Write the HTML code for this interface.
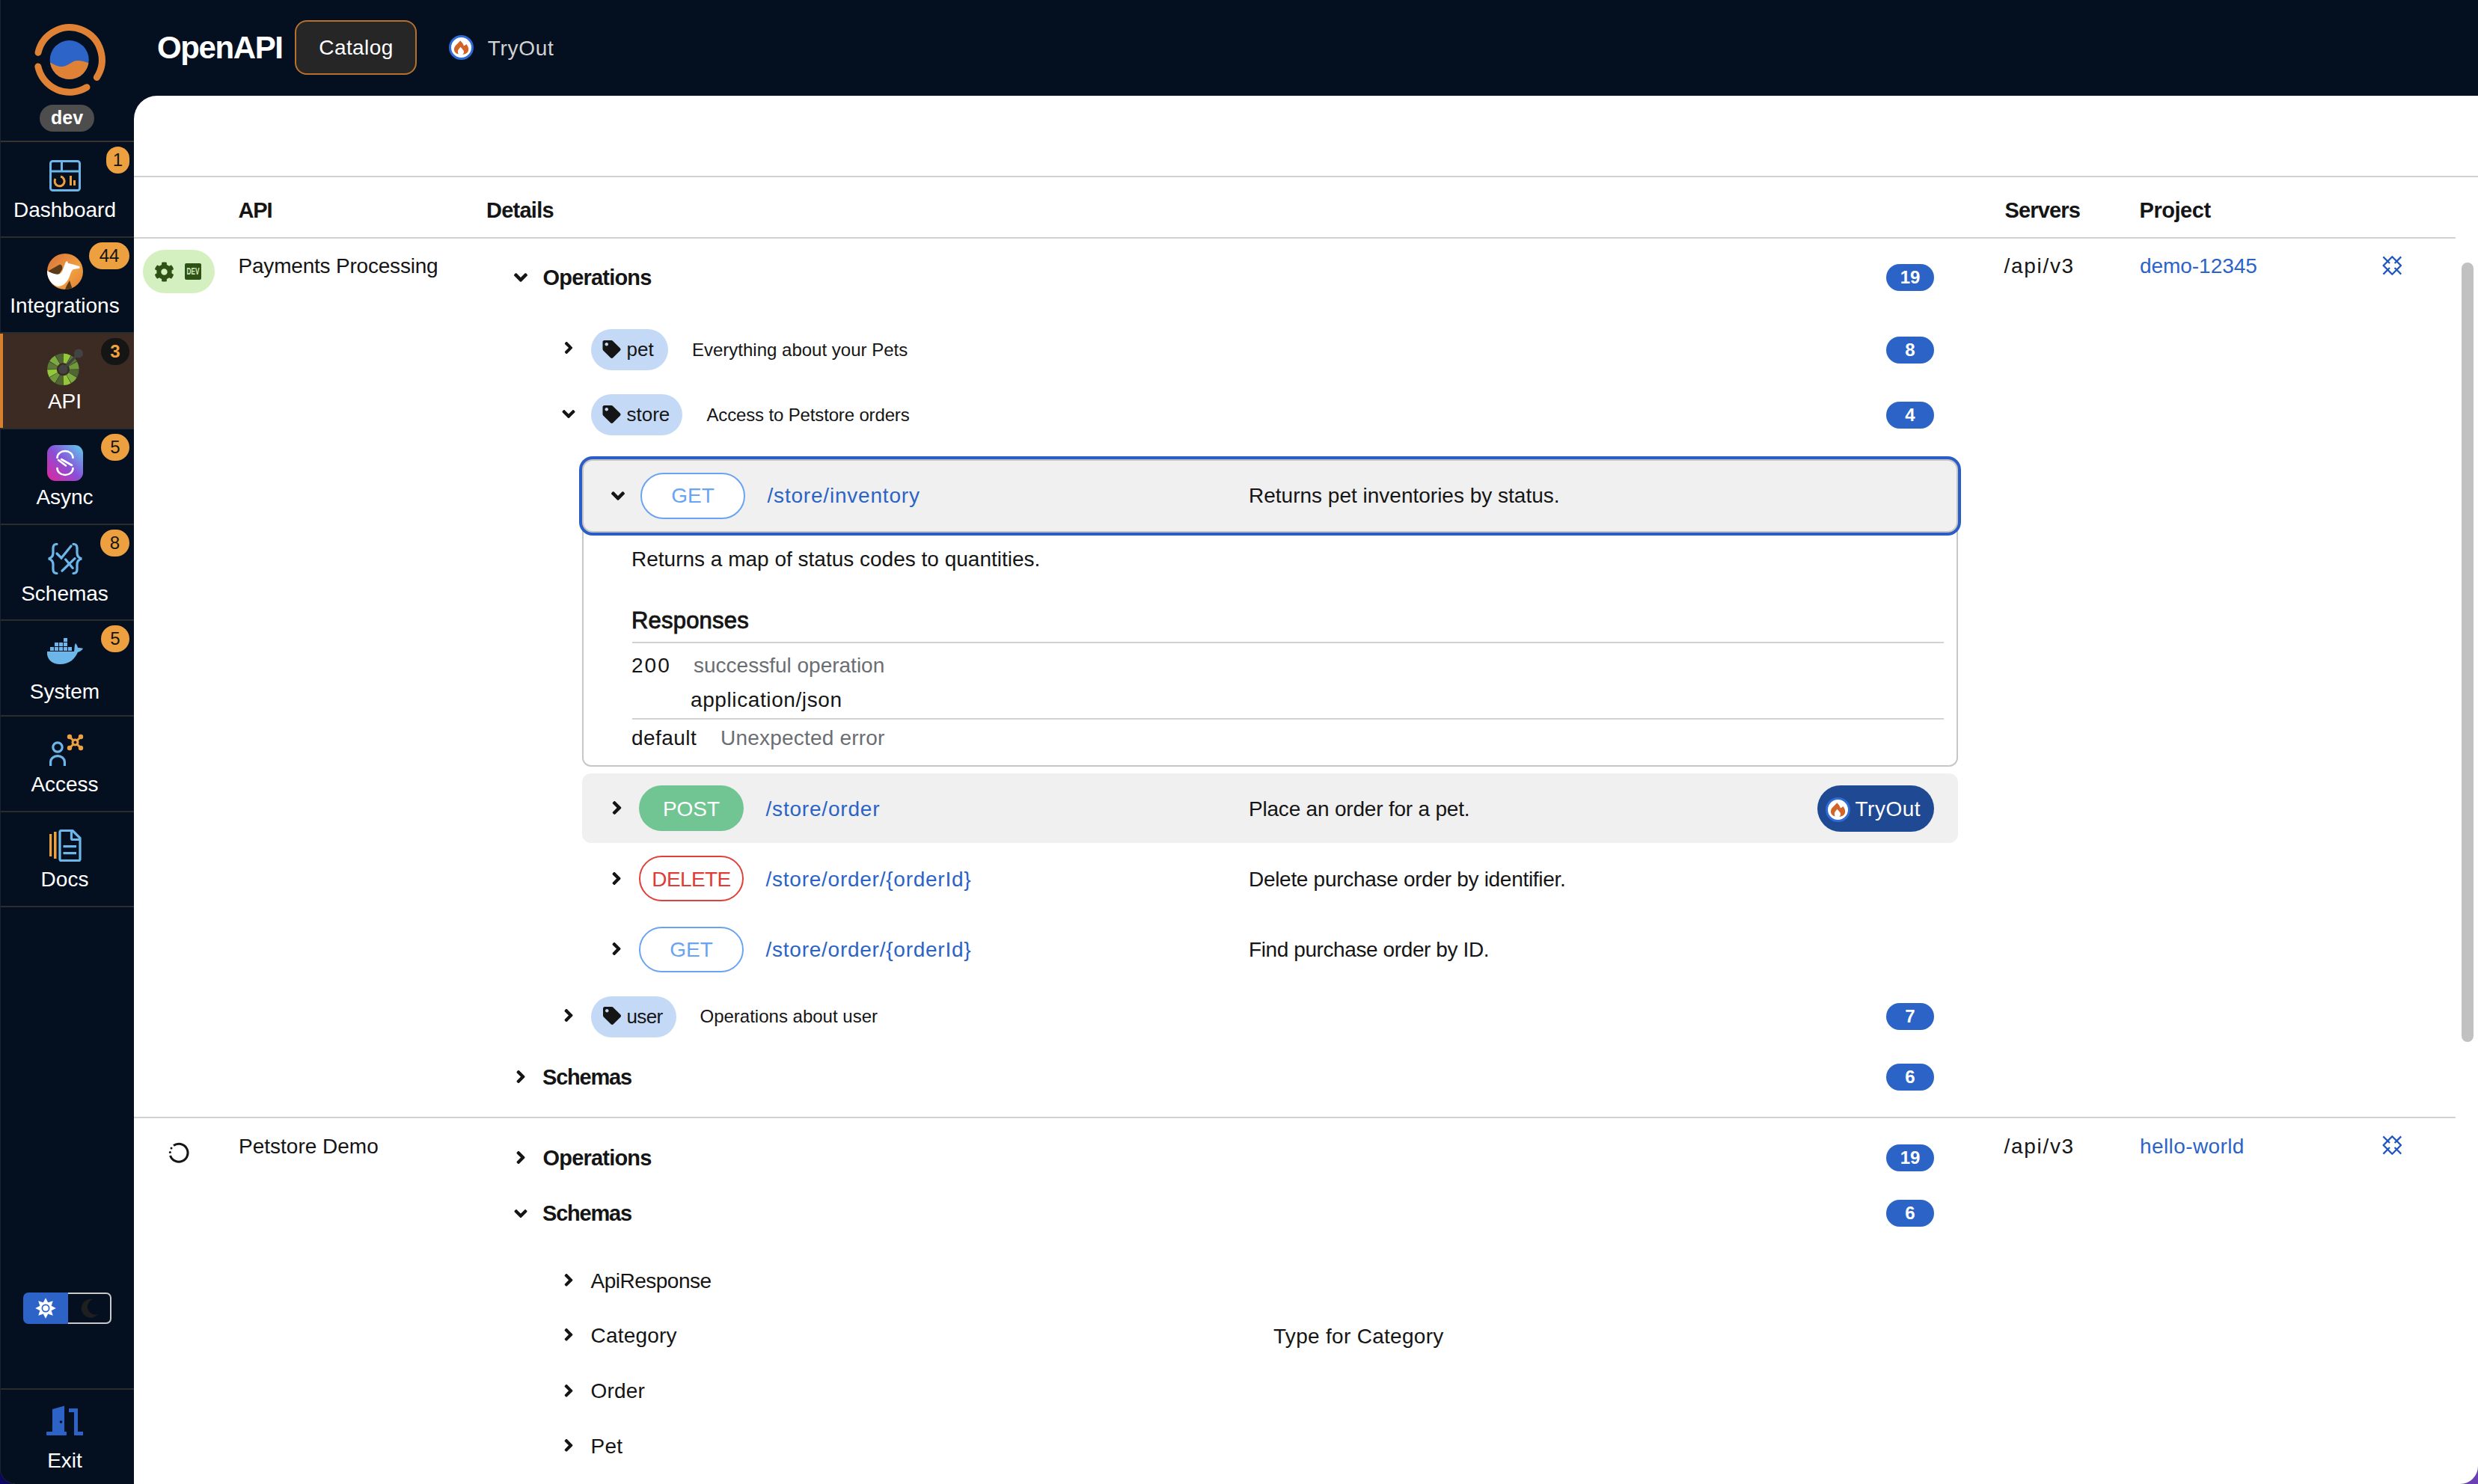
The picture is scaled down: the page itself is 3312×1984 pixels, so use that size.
<!DOCTYPE html>
<html><head><meta charset="utf-8"><title>OpenAPI Catalog</title>
<style>
html,body{margin:0;padding:0;}
body{width:3312px;height:1984px;overflow:hidden;position:relative;background:#04101f;font-family:"Liberation Sans",sans-serif;color:#151515;}
.a{position:absolute;}
.t{position:absolute;white-space:nowrap;}
svg.a{display:block;}
</style></head><body>
<div class="a" style="left:0px;top:0px;width:3312px;height:1984px;background:#04101f;"></div>
<div class="a" style="left:0px;top:0px;width:1px;height:1984px;background:#1b2433;"></div>
<svg class="a" style="left:0px;top:0px;" width="179" height="180" viewBox="0 0 179 180"><g fill="none" stroke="#e08236" stroke-width="9" stroke-linecap="round"><path d="M51.01 70.28 A43.2 43.2 0 1 1 129.33 103.53"/><path d="M115.99 116.64 A43.2 43.2 0 0 1 50.84 88.98"/></g><clipPath id="lc"><circle cx="92.7" cy="80" r="26"/></clipPath><g clip-path="url(#lc)"><rect x="60" y="50" width="70" height="70" fill="#2d64c8"/><path d="M60 81 C70 84 76 90 84 89 C92 88 96 81 104 81 C110 81 114 83 122 85 L122 112 L60 112 Z" fill="#e08236"/></g></svg>
<div class="a" style="left:53px;top:140px;width:73px;height:36px;background:#4d4d4d;border-radius:18px;"></div>
<div class="t" style="left:49.5px;width:80px;text-align:center;top:144.8px;font-size:25px;line-height:25px;font-weight:700;color:#ffffff;">dev</div>
<div class="a" style="left:1px;top:188px;width:178px;height:2px;background:#37332d;"></div>
<div class="a" style="left:1px;top:316px;width:178px;height:2px;background:#2c2c2c;"></div>
<div class="a" style="left:1px;top:444px;width:178px;height:2px;background:#2c2c2c;"></div>
<div class="a" style="left:1px;top:572px;width:178px;height:2px;background:#2c2c2c;"></div>
<div class="a" style="left:1px;top:700px;width:178px;height:2px;background:#2c2c2c;"></div>
<div class="a" style="left:1px;top:828px;width:178px;height:2px;background:#2c2c2c;"></div>
<div class="a" style="left:1px;top:956px;width:178px;height:2px;background:#2c2c2c;"></div>
<div class="a" style="left:1px;top:1084px;width:178px;height:2px;background:#2c2c2c;"></div>
<div class="a" style="left:1px;top:1211px;width:178px;height:2px;background:#2c2c2c;"></div>
<div class="a" style="left:1px;top:446px;width:178px;height:126px;background:#3c2b23;"></div>
<div class="a" style="left:0px;top:446px;width:4px;height:126px;background:#d57f2f;"></div>
<div class="t" style="left:1.5px;width:170px;text-align:center;top:267.3px;font-size:28px;line-height:28px;color:#ffffff;">Dashboard</div>
<div class="t" style="left:1.5px;width:170px;text-align:center;top:395.3px;font-size:28px;line-height:28px;color:#ffffff;">Integrations</div>
<div class="t" style="left:1.5px;width:170px;text-align:center;top:522.9px;font-size:28px;line-height:28px;color:#ffffff;">API</div>
<div class="t" style="left:1.5px;width:170px;text-align:center;top:651.0px;font-size:28px;line-height:28px;color:#ffffff;">Async</div>
<div class="t" style="left:1.5px;width:170px;text-align:center;top:779.6px;font-size:28px;line-height:28px;color:#ffffff;">Schemas</div>
<div class="t" style="left:1.5px;width:170px;text-align:center;top:911.3px;font-size:28px;line-height:28px;color:#ffffff;">System</div>
<div class="t" style="left:1.5px;width:170px;text-align:center;top:1035.3px;font-size:28px;line-height:28px;color:#ffffff;">Access</div>
<div class="t" style="left:1.5px;width:170px;text-align:center;top:1162.3px;font-size:28px;line-height:28px;color:#ffffff;">Docs</div>
<div class="a" style="left:142px;top:196px;width:31px;height:36px;background:#eda03f;border-radius:18px;"></div>
<div class="t" style="left:127.5px;width:60px;text-align:center;top:202.2px;font-size:24px;line-height:24px;">1</div>
<div class="a" style="left:119px;top:324px;width:54px;height:36px;background:#eda03f;border-radius:18px;"></div>
<div class="t" style="left:116.0px;width:60px;text-align:center;top:330.2px;font-size:24px;line-height:24px;">44</div>
<div class="a" style="left:135px;top:452px;width:38px;height:36px;background:#151515;border-radius:18px;"></div>
<div class="t" style="left:124.0px;width:60px;text-align:center;top:458.2px;font-size:24px;line-height:24px;font-weight:700;color:#f0a33d;">3</div>
<div class="a" style="left:135px;top:580px;width:38px;height:36px;background:#eda03f;border-radius:18px;"></div>
<div class="t" style="left:124.0px;width:60px;text-align:center;top:586.2px;font-size:24px;line-height:24px;">5</div>
<div class="a" style="left:134px;top:708px;width:39px;height:36px;background:#eda03f;border-radius:18px;"></div>
<div class="t" style="left:123.5px;width:60px;text-align:center;top:714.2px;font-size:24px;line-height:24px;">8</div>
<div class="a" style="left:135px;top:836px;width:38px;height:36px;background:#eda03f;border-radius:18px;"></div>
<div class="t" style="left:124.0px;width:60px;text-align:center;top:842.2px;font-size:24px;line-height:24px;">5</div>
<svg class="a" style="left:66px;top:214px;" width="42" height="42" viewBox="0 0 42 42"><g fill="none" stroke="#6cb6ea" stroke-width="3"><rect x="1.5" y="1.5" width="39" height="39" rx="3"/><path d="M1.5 15 H40.5 M16.5 1.5 V15"/></g><path d="M8 25 A6.5 6.5 0 1 0 15 22" fill="none" stroke="#eda03f" stroke-width="3"/><rect x="27" y="21" width="3" height="13" fill="#eda03f"/><rect x="32" y="27" width="3" height="7" fill="#eda03f"/></svg>
<svg class="a" style="left:63px;top:339px;" width="48" height="48" viewBox="0 0 48 48"><defs><linearGradient id="cg" x1="0" y1="0" x2="1" y2="1"><stop offset="0" stop-color="#d9703a"/><stop offset="0.6" stop-color="#f0a040"/><stop offset="1" stop-color="#e07b35"/></linearGradient><clipPath id="cc"><circle cx="24" cy="24" r="24"/></clipPath></defs><circle cx="24" cy="24" r="24" fill="url(#cg)"/><g clip-path="url(#cc)"><path d="M2 23 L16 15 C19 14 21 17 20 21 L15 29 L2 36 Z" fill="#5b3a1a"/><path d="M26 43 L30 36 L34 48 L24 48 Z" fill="#5b3a1a"/><path d="M0 23 C6 26 12 29 17 27 C21 25 22 17 25 11 L27 10 L28 13 L33 14 L43 17 C44 18 44 20 42 20 L35 21 C31 24 31 30 28 35 C25 40 20 44 14 44 C7 42 2 36 0 28 Z" fill="#ffffff"/></g></svg>
<svg class="a" style="left:60px;top:465px;" width="60" height="60" viewBox="0 0 60 60"><path d="M24.55 20.30 L24.77 7.50 A21.3 21.3 0 0 1 34.73 10.17 L28.52 21.37 A8.5 8.5 0 0 0 24.55 20.30 Z" fill="#93c83a"/><path d="M28.78 21.51 L35.37 10.54 A21.3 21.3 0 0 1 42.66 17.83 L31.69 24.42 A8.5 8.5 0 0 0 28.78 21.51 Z" fill="#5a7a36"/><path d="M31.83 24.68 L43.03 18.47 A21.3 21.3 0 0 1 45.70 28.43 L32.90 28.65 A8.5 8.5 0 0 0 31.83 24.68 Z" fill="#6f9a3c"/><path d="M32.90 28.95 L45.70 29.17 A21.3 21.3 0 0 1 43.03 39.13 L31.83 32.92 A8.5 8.5 0 0 0 32.90 28.95 Z" fill="#4f6534"/><path d="M31.69 33.18 L42.66 39.77 A21.3 21.3 0 0 1 35.37 47.06 L28.78 36.09 A8.5 8.5 0 0 0 31.69 33.18 Z" fill="#7cab42"/><path d="M28.52 36.23 L34.73 47.43 A21.3 21.3 0 0 1 24.77 50.10 L24.55 37.30 A8.5 8.5 0 0 0 28.52 36.23 Z" fill="#93c83a"/><path d="M24.25 37.30 L24.03 50.10 A21.3 21.3 0 0 1 14.07 47.43 L20.28 36.23 A8.5 8.5 0 0 0 24.25 37.30 Z" fill="#4f6534"/><path d="M20.02 36.09 L13.43 47.06 A21.3 21.3 0 0 1 6.14 39.77 L17.11 33.18 A8.5 8.5 0 0 0 20.02 36.09 Z" fill="#6f9a3c"/><path d="M16.97 32.92 L5.77 39.13 A21.3 21.3 0 0 1 3.10 29.17 L15.90 28.95 A8.5 8.5 0 0 0 16.97 32.92 Z" fill="#93c83a"/><path d="M15.90 28.65 L3.10 28.43 A21.3 21.3 0 0 1 5.77 18.47 L16.97 24.68 A8.5 8.5 0 0 0 15.90 28.65 Z" fill="#5a7a36"/><path d="M17.11 24.42 L6.14 17.83 A21.3 21.3 0 0 1 13.43 10.54 L20.02 21.51 A8.5 8.5 0 0 0 17.11 24.42 Z" fill="#7cab42"/><path d="M20.28 21.37 L14.07 10.17 A21.3 21.3 0 0 1 24.03 7.50 L24.25 20.30 A8.5 8.5 0 0 0 20.28 21.37 Z" fill="#4f6534"/><circle cx="24.400000000000006" cy="28.80000000000001" r="8" fill="#3c2b23"/><circle cx="24.400000000000006" cy="28.80000000000001" r="6.2" fill="#434343"/><line x1="24.400000000000006" y1="28.80000000000001" x2="45" y2="7.5" stroke="#434343" stroke-width="3.5"/><circle cx="45" cy="7.5" r="6" fill="#434343"/></svg>
<svg class="a" style="left:63px;top:595px;" width="48" height="48" viewBox="0 0 48 48"><defs><linearGradient id="ag" x1="0" y1="1" x2="1" y2="0"><stop offset="0" stop-color="#e0269a"/><stop offset="0.5" stop-color="#8a4fd8"/><stop offset="1" stop-color="#5cd0f0"/></linearGradient></defs><rect x="0" y="0" width="48" height="48" rx="11" fill="url(#ag)"/><g fill="none" stroke="#fff" stroke-width="2.6" stroke-linecap="round"><path d="M13.5 17 A10.5 9 0 0 1 34.5 17"/><path d="M13.5 31 A10.5 9 0 0 0 34.5 31"/><path d="M15 20 L25 27.5 M19 19 L33 27"/></g></svg>
<svg class="a" style="left:63px;top:726px;" width="48" height="42" viewBox="0 0 48 42"><g fill="none" stroke="#6cb6ea" stroke-width="3.2" stroke-linecap="round"><path d="M13 1.5 C7 1.5 8 6 8 13 C8 18 6 20 1.8 21 C6 22 8 24 8 29 C8 36 7 40.5 13 40.5"/><path d="M35 1.5 C41 1.5 40 6 40 13 C40 18 42 20 46.2 21 C42 22 40 24 40 29 C40 36 41 40.5 35 40.5"/><path d="M13 14 L19 20 L32 4"/><path d="M24.7 22 L34.2 33.4 M37 20.7 L20 37.2"/></g></svg>
<svg class="a" style="left:63px;top:853px;" width="48" height="36" viewBox="0 0 48 36"><g fill="#6cb6ea"><rect x="4" y="12" width="5" height="5"/><rect x="10" y="12" width="5" height="5"/><rect x="16" y="12" width="5" height="5"/><rect x="22" y="12" width="5" height="5"/><rect x="28" y="12" width="5" height="5"/><rect x="10" y="6" width="5" height="5"/><rect x="16" y="6" width="5" height="5"/><rect x="22" y="6" width="5" height="5"/><rect x="22" y="0" width="5" height="5"/><path d="M0 18 L36 18 C37 14 36 10 38 7 C40 9 41 12 41 13 C43 13 46 13 48 14 C46 17 44 18 41 19 C37 28 30 35 17 35 C7 35 1 29 0 22 Z"/></g></svg>
<svg class="a" style="left:63px;top:978px;" width="50" height="48" viewBox="0 0 50 48"><g fill="none" stroke="#6cb6ea" stroke-width="3.2"><circle cx="14" cy="21" r="6.2"/><path d="M4.6 46 V41 A9.4 8.4 0 0 1 23.4 41 V46"/></g><g stroke="#eda03f" stroke-width="3" fill="none"><path d="M30 7 L45 22 M45 7 L30 22"/><circle cx="37.5" cy="14.5" r="3.5" fill="#04101f"/></g><g fill="#eda03f"><circle cx="30" cy="7" r="3.2"/><circle cx="45" cy="7" r="3.2"/><circle cx="30" cy="22" r="3.2"/><circle cx="45" cy="22" r="3.2"/></g></svg>
<svg class="a" style="left:66px;top:1109px;" width="44" height="44" viewBox="0 0 44 44"><rect x="0" y="6" width="3.2" height="30" fill="#eda03f"/><rect x="6" y="3" width="3.5" height="36" fill="#eda03f"/><path d="M14 3 A2 2 0 0 1 16 1.5 H31 L41 11.5 V40 A2 2 0 0 1 39 41.5 H16 A2 2 0 0 1 14 40 Z" fill="none" stroke="#6cb6ea" stroke-width="3.2" stroke-linejoin="round"/><path d="M29.5 2 V12 A1.5 1.5 0 0 0 31 13.5 H41" fill="none" stroke="#6cb6ea" stroke-width="3.2"/><rect x="18.5" y="21" width="17.5" height="3.2" fill="#6cb6ea"/><rect x="18.5" y="30" width="17.5" height="3.2" fill="#6cb6ea"/></svg>
<div class="a" style="left:31px;top:1728px;width:60px;height:42px;background:#2d63c6;border-radius:7px 0 0 7px;"></div>
<div class="a" style="left:91px;top:1728px;width:58px;height:42px;border:2px solid #c9c9c9;border-left:none;border-radius:0 7px 7px 0;box-sizing:border-box;"></div>
<svg class="a" style="left:46px;top:1734px;" width="30" height="30" viewBox="0 0 30 30"><g fill="#fff"><path d="M15 1.2 L18 7 L12 7 Z" transform="rotate(0 15 15)"/><path d="M15 1.2 L18 7 L12 7 Z" transform="rotate(45 15 15)"/><path d="M15 1.2 L18 7 L12 7 Z" transform="rotate(90 15 15)"/><path d="M15 1.2 L18 7 L12 7 Z" transform="rotate(135 15 15)"/><path d="M15 1.2 L18 7 L12 7 Z" transform="rotate(180 15 15)"/><path d="M15 1.2 L18 7 L12 7 Z" transform="rotate(225 15 15)"/><path d="M15 1.2 L18 7 L12 7 Z" transform="rotate(270 15 15)"/><path d="M15 1.2 L18 7 L12 7 Z" transform="rotate(315 15 15)"/><circle cx="15" cy="15" r="8.5"/></g><circle cx="15" cy="15" r="5.5" fill="#2d63c6"/><circle cx="15" cy="15" r="3.8" fill="#fff"/></svg>
<svg class="a" style="left:104px;top:1734px;" width="30" height="30" viewBox="0 0 30 30"><path d="M20 3 A12.5 12.5 0 1 0 27 23 A10 10 0 0 1 20 3 Z" fill="#1f1f1f"/></svg>
<div class="a" style="left:1px;top:1856px;width:178px;height:2px;background:#2c2c2c;"></div>
<svg class="a" style="left:62px;top:1878px;" width="50" height="42" viewBox="0 0 50 42"><g fill="#2d62c6"><path d="M8 6 L24 1.5 V38 H8 Z"/><rect x="0" y="36" width="27" height="5" rx="1"/><path d="M30 5 H42 V36 H49 V41 H37 V10 H30 Z"/></g><circle cx="19.5" cy="23" r="1.8" fill="#04101f"/></svg>
<div class="t" style="left:1.5px;width:170px;text-align:center;top:1939.1px;font-size:28px;line-height:28px;color:#ffffff;">Exit</div>
<div class="t" style="left:210.0px;top:42.8px;font-size:42px;line-height:42px;font-weight:700;color:#ffffff;letter-spacing:-1.4px;">OpenAPI</div>
<div class="a" style="left:394px;top:27px;width:163px;height:73px;background:#262626;border:2px solid #b8702f;border-radius:16px;box-sizing:border-box;"></div>
<div class="t" style="left:426.3px;top:50.3px;font-size:28px;line-height:28px;color:#ffffff;letter-spacing:0.4px;">Catalog</div>
<div class="a" style="left:600.0px;top:47.0px;width:33.0px;height:33.0px;background:#fff;border:3px solid #2e6bd6;border-radius:50%;box-sizing:border-box;"></div>
<svg class="a" style="left:600.0px;top:47.0px;" width="33" height="33" viewBox="-16.5 -16.5 33 33"><path fill="#d2642a" d="M-3.8 9.1 C-7.5 8 -10 5 -9.5 1.5 C-9 -3 -4 -5 -1.4 -9.3 C0.5 -7.5 2.5 -5.5 3.3 -2.2 C4.5 -2.5 6 -3.5 6.8 -4.5 C9.5 -1.5 10.5 2.5 9 5.5 C7.5 8 5 9.3 1.8 9.4 C3.8 7.5 4 5.5 3 4 C2 2.5 0.5 1 -1 -0.8 C-2.5 1.5 -4.6 3 -4.6 5 C-4.6 6.5 -4.3 8 -3.8 9.1 Z"/></svg>
<div class="t" style="left:651.8px;top:50.5px;font-size:28px;line-height:28px;color:#d2d2d2;letter-spacing:0.7px;">TryOut</div>
<div class="a" style="left:179px;top:128px;width:3133px;height:1856px;background:#fff;border-top-left-radius:31px;"></div>
<div class="a" style="left:179px;top:235px;width:3133px;height:2px;background:#d2d2d2;"></div>
<div class="t" style="left:318.5px;top:266.9px;font-size:29px;line-height:29px;font-weight:700;letter-spacing:-1.1px;">API</div>
<div class="t" style="left:650.0px;top:266.9px;font-size:29px;line-height:29px;font-weight:700;letter-spacing:-0.75px;">Details</div>
<div class="t" style="left:2679.5px;top:266.7px;font-size:29px;line-height:29px;font-weight:700;letter-spacing:-0.85px;">Servers</div>
<div class="t" style="left:2859.5px;top:266.7px;font-size:29px;line-height:29px;font-weight:700;letter-spacing:-0.45px;">Project</div>
<div class="a" style="left:179px;top:317px;width:3103px;height:2px;background:#d2d2d2;"></div>
<div class="a" style="left:3290px;top:351px;width:16px;height:1042px;background:#c1c1c1;border-radius:8px;"></div>
<div class="a" style="left:191px;top:334px;width:96px;height:58px;background:#d5f0c0;border-radius:29px;"></div>
<svg class="a" style="left:206px;top:350px;" width="27" height="27" viewBox="0 0 512 512"><path fill="#2e5215" d="M487.4 315.7l-42.6-24.6c4.3-23.2 4.3-47 0-70.2l42.6-24.6c4.9-2.8 7.1-8.6 5.5-14-11.1-35.6-30-67.8-54.7-94.6-3.8-4.1-10-5.1-14.8-2.3L380.8 110c-17.9-15.4-38.5-27.3-60.8-35.1V25.8c0-5.6-3.9-10.5-9.4-11.7-36.7-8.2-74.3-7.8-109.2 0-5.5 1.2-9.4 6.1-9.4 11.7V75c-22.2 7.9-42.8 19.8-60.8 35.1L88.7 85.5c-4.9-2.8-11-1.9-14.8 2.3-24.7 26.7-43.6 58.9-54.7 94.6-1.7 5.4.6 11.2 5.5 14L67.3 221c-4.3 23.2-4.3 47 0 70.2l-42.6 24.6c-4.9 2.8-7.1 8.6-5.5 14 11.1 35.6 30 67.8 54.7 94.6 3.8 4.1 10 5.1 14.8 2.3l42.6-24.6c17.9 15.4 38.5 27.3 60.8 35.1v49.2c0 5.6 3.9 10.5 9.4 11.7 36.7 8.2 74.3 7.8 109.2 0 5.5-1.2 9.4-6.1 9.4-11.7v-49.2c22.2-7.9 42.8-19.8 60.8-35.1l42.6 24.6c4.9 2.8 11 1.9 14.8-2.3 24.7-26.7 43.6-58.9 54.7-94.6 1.5-5.5-.7-11.3-5.6-14.1zM256 336c-44.1 0-80-35.9-80-80s35.9-80 80-80 80 35.9 80 80-35.9 80-80 80z"/></svg>
<div class="a" style="left:247px;top:352px;width:22px;height:22px;background:#2e5215;border-radius:2px;"></div>
<div class="t" style="left:245px;top:356px;width:26px;text-align:center;font-size:10px;line-height:14px;font-weight:700;color:#d5f0c0;letter-spacing:0px;transform:scale(0.82,1.25)">DEV</div>
<div class="t" style="left:318.5px;top:341.6px;font-size:28px;line-height:28px;letter-spacing:-0.2px;">Payments Processing</div>
<div class="t" style="left:2678.5px;top:341.9px;font-size:28px;line-height:28px;letter-spacing:1.7px;">/api/v3</div>
<div class="t" style="left:2860.0px;top:341.9px;font-size:28px;line-height:28px;color:#2b63c6;letter-spacing:-0.05px;">demo-12345</div>
<svg class="a" style="left:3184px;top:342px;" width="27" height="27" viewBox="0 0 27 27"><g fill="none" stroke="#1f55c0" stroke-width="2.3" stroke-linejoin="round" stroke-linecap="square"><path d="M13.3 1.2 L25 13 L13.3 24.8 L1.6 13 Z"/><path d="M2.2 2.2 L9.2 9.2 M24.4 2.2 L17.4 9.2 M2.2 23.8 L9.2 16.8 M24.4 23.8 L17.4 16.8"/></g></svg>
<svg class="a" style="left:687px;top:365px;overflow:visible" width="18" height="12" viewBox="0 152 320 207"><path fill="#151515" d="M143 352.3L7 216.3c-9.4-9.4-9.4-24.6 0-33.9l22.6-22.6c9.4-9.4 24.6-9.4 33.9 0l96.4 96.4 96.4-96.4c9.4-9.4 24.6-9.4 33.9 0l22.6 22.6c9.4 9.4 9.4 24.6 0 33.9l-136 136c-9.4 9.5-24.6 9.5-34 .1z"/></svg>
<div class="t" style="left:725.5px;top:357.1px;font-size:29px;line-height:29px;font-weight:700;letter-spacing:-0.8px;">Operations</div>
<div class="a" style="left:2521px;top:353px;width:64px;height:36px;background:#2b63c6;border-radius:18px;"></div>
<div class="t" style="left:2521.0px;width:64px;text-align:center;top:358.7px;font-size:24px;line-height:24px;font-weight:700;color:#ffffff;">19</div>
<svg class="a" style="left:754px;top:457px;overflow:visible" width="12" height="16" viewBox="24 96 207 320"><path fill="#151515" d="M224.3 273l-136 136c-9.4 9.4-24.6 9.4-33.9 0l-22.6-22.6c-9.4-9.4-9.4-24.6 0-33.9l96.4-96.4-96.4-96.4c-9.4-9.4-9.4-24.6 0-33.9L54.3 103c9.4-9.4 24.6-9.4 33.9 0l136 136c9.5 9.4 9.5 24.6.1 34z"/></svg>
<div class="a" style="left:790px;top:440px;width:103px;height:55px;background:#c3d9f6;border-radius:28px;"></div>
<svg class="a" style="left:805px;top:455px;" width="25" height="24" viewBox="0 0 512 512"><path fill="#151515" d="M0 252.118V48C0 21.49 21.49 0 48 0h204.118a48 48 0 0 1 33.941 14.059l211.882 211.882c18.745 18.745 18.745 49.137 0 67.882L293.823 497.941c-18.745 18.745-49.137 18.745-67.882 0L14.059 286.059A48 48 0 0 1 0 252.118zM112 64c-26.51 0-48 21.49-48 48s21.49 48 48 48 48-21.49 48-48-21.49-48-48-48z"/></svg>
<div class="t" style="left:837.5px;top:454.0px;font-size:26px;line-height:26px;">pet</div>
<div class="t" style="left:925.0px;top:455.7px;font-size:24px;line-height:24px;">Everything about your Pets</div>
<div class="a" style="left:2521px;top:450px;width:64px;height:36px;background:#2b63c6;border-radius:18px;"></div>
<div class="t" style="left:2521.0px;width:64px;text-align:center;top:455.7px;font-size:24px;line-height:24px;font-weight:700;color:#ffffff;">8</div>
<svg class="a" style="left:751px;top:548px;overflow:visible" width="18" height="11" viewBox="0 152 320 207"><path fill="#151515" d="M143 352.3L7 216.3c-9.4-9.4-9.4-24.6 0-33.9l22.6-22.6c9.4-9.4 24.6-9.4 33.9 0l96.4 96.4 96.4-96.4c9.4-9.4 24.6-9.4 33.9 0l22.6 22.6c9.4 9.4 9.4 24.6 0 33.9l-136 136c-9.4 9.5-24.6 9.5-34 .1z"/></svg>
<div class="a" style="left:790px;top:527px;width:122px;height:55px;background:#c3d9f6;border-radius:28px;"></div>
<svg class="a" style="left:805px;top:542px;" width="25" height="24" viewBox="0 0 512 512"><path fill="#151515" d="M0 252.118V48C0 21.49 21.49 0 48 0h204.118a48 48 0 0 1 33.941 14.059l211.882 211.882c18.745 18.745 18.745 49.137 0 67.882L293.823 497.941c-18.745 18.745-49.137 18.745-67.882 0L14.059 286.059A48 48 0 0 1 0 252.118zM112 64c-26.51 0-48 21.49-48 48s21.49 48 48 48 48-21.49 48-48-21.49-48-48-48z"/></svg>
<div class="t" style="left:837.5px;top:540.8px;font-size:26px;line-height:26px;">store</div>
<div class="t" style="left:944.5px;top:542.5px;font-size:24px;line-height:24px;letter-spacing:-0.15px;">Access to Petstore orders</div>
<div class="a" style="left:2521px;top:537px;width:64px;height:36px;background:#2b63c6;border-radius:18px;"></div>
<div class="t" style="left:2521.0px;width:64px;text-align:center;top:542.7px;font-size:24px;line-height:24px;font-weight:700;color:#ffffff;">4</div>
<div class="a" style="left:778px;top:700px;width:1839px;height:325px;border:2px solid #c7c7c7;border-top:none;border-radius:0 0 12px 12px;box-sizing:border-box;"></div>
<div class="a" style="left:774px;top:610px;width:1847px;height:106px;background:#2a5ec6;border-radius:18px;"></div>
<div class="a" style="left:778px;top:614px;width:1839px;height:98px;background:#f0f0f0;border:2px solid #c4c4c4;border-radius:14px;box-sizing:border-box;"></div>
<svg class="a" style="left:817px;top:657px;overflow:visible" width="18" height="12" viewBox="0 152 320 207"><path fill="#151515" d="M143 352.3L7 216.3c-9.4-9.4-9.4-24.6 0-33.9l22.6-22.6c9.4-9.4 24.6-9.4 33.9 0l96.4 96.4 96.4-96.4c9.4-9.4 24.6-9.4 33.9 0l22.6 22.6c9.4 9.4 9.4 24.6 0 33.9l-136 136c-9.4 9.5-24.6 9.5-34 .1z"/></svg>
<div class="a" style="left:856px;top:632px;width:140px;height:62px;background:#fff;border:2px solid #69a4f2;border-radius:31px;box-sizing:border-box;"></div>
<div class="t" style="left:856.0px;width:140px;text-align:center;top:649.3px;font-size:28px;line-height:28px;color:#69a4f2;">GET</div>
<div class="t" style="left:1025.5px;top:649.3px;font-size:28px;line-height:28px;color:#2b63c6;letter-spacing:0.8px;">/store/inventory</div>
<div class="t" style="left:1669.0px;top:649.3px;font-size:28px;line-height:28px;">Returns pet inventories by status.</div>
<div class="t" style="left:844.0px;top:734.3px;font-size:28px;line-height:28px;">Returns a map of status codes to quantities.</div>
<div class="t" style="left:844.0px;top:814.2px;font-size:31px;line-height:31px;letter-spacing:0.2px;-webkit-text-stroke:0.9px #151515;">Responses</div>
<div class="a" style="left:845px;top:858px;width:1753px;height:2px;background:#d2d2d2;"></div>
<div class="t" style="left:844.0px;top:875.8px;font-size:28px;line-height:28px;letter-spacing:2px;">200</div>
<div class="t" style="left:927.0px;top:875.8px;font-size:28px;line-height:28px;color:#6a6e73;">successful operation</div>
<div class="t" style="left:923.0px;top:922.3px;font-size:28px;line-height:28px;letter-spacing:0.6px;">application/json</div>
<div class="a" style="left:845px;top:960px;width:1753px;height:2px;background:#d2d2d2;"></div>
<div class="t" style="left:844.0px;top:973.3px;font-size:28px;line-height:28px;letter-spacing:0.45px;">default</div>
<div class="t" style="left:963.0px;top:973.3px;font-size:28px;line-height:28px;color:#6a6e73;letter-spacing:0.2px;">Unexpected error</div>
<div class="a" style="left:778px;top:1034px;width:1839px;height:93px;background:#f0f0f0;border-radius:12px;"></div>
<svg class="a" style="left:817.5px;top:1071px;overflow:visible" width="13.0" height="18" viewBox="24 96 207 320"><path fill="#151515" d="M224.3 273l-136 136c-9.4 9.4-24.6 9.4-33.9 0l-22.6-22.6c-9.4-9.4-9.4-24.6 0-33.9l96.4-96.4-96.4-96.4c-9.4-9.4-9.4-24.6 0-33.9L54.3 103c9.4-9.4 24.6-9.4 33.9 0l136 136c9.5 9.4 9.5 24.6.1 34z"/></svg>
<div class="a" style="left:854px;top:1050px;width:140px;height:61px;background:#70c592;border-radius:31px;"></div>
<div class="t" style="left:854.0px;width:140px;text-align:center;top:1067.6px;font-size:28px;line-height:28px;color:#ffffff;">POST</div>
<div class="t" style="left:1023.5px;top:1067.5px;font-size:28px;line-height:28px;color:#2b63c6;letter-spacing:0.8px;">/store/order</div>
<div class="t" style="left:1669.0px;top:1067.7px;font-size:28px;line-height:28px;letter-spacing:-0.2px;">Place an order for a pet.</div>
<div class="a" style="left:2429px;top:1050px;width:156px;height:62px;background:#1f4a93;border-radius:31px;"></div>
<div class="a" style="left:2439.9px;top:1066.0px;width:33.0px;height:33.0px;background:#fff;border:3px solid #2e6bd6;border-radius:50%;box-sizing:border-box;"></div>
<svg class="a" style="left:2439.9px;top:1066.0px;" width="33" height="33" viewBox="-16.5 -16.5 33 33"><path fill="#d2642a" d="M-3.8 9.1 C-7.5 8 -10 5 -9.5 1.5 C-9 -3 -4 -5 -1.4 -9.3 C0.5 -7.5 2.5 -5.5 3.3 -2.2 C4.5 -2.5 6 -3.5 6.8 -4.5 C9.5 -1.5 10.5 2.5 9 5.5 C7.5 8 5 9.3 1.8 9.4 C3.8 7.5 4 5.5 3 4 C2 2.5 0.5 1 -1 -0.8 C-2.5 1.5 -4.6 3 -4.6 5 C-4.6 6.5 -4.3 8 -3.8 9.1 Z"/></svg>
<div class="t" style="left:2479.5px;top:1068.3px;font-size:28px;line-height:28px;color:#ffffff;letter-spacing:0.5px;">TryOut</div>
<svg class="a" style="left:818px;top:1166px;overflow:visible" width="12" height="17" viewBox="24 96 207 320"><path fill="#151515" d="M224.3 273l-136 136c-9.4 9.4-24.6 9.4-33.9 0l-22.6-22.6c-9.4-9.4-9.4-24.6 0-33.9l96.4-96.4-96.4-96.4c-9.4-9.4-9.4-24.6 0-33.9L54.3 103c9.4-9.4 24.6-9.4 33.9 0l136 136c9.5 9.4 9.5 24.6.1 34z"/></svg>
<div class="a" style="left:854px;top:1144px;width:140px;height:61px;border:2px solid #df4038;border-radius:31px;box-sizing:border-box;"></div>
<div class="t" style="left:854.0px;width:140px;text-align:center;top:1161.8px;font-size:28px;line-height:28px;color:#dd3d36;letter-spacing:-0.6px;">DELETE</div>
<div class="t" style="left:1023.5px;top:1161.8px;font-size:28px;line-height:28px;color:#2b63c6;letter-spacing:0.75px;">/store/order/{orderId}</div>
<div class="t" style="left:1669.0px;top:1161.8px;font-size:28px;line-height:28px;letter-spacing:-0.3px;">Delete purchase order by identifier.</div>
<svg class="a" style="left:818px;top:1260px;overflow:visible" width="12" height="17" viewBox="24 96 207 320"><path fill="#151515" d="M224.3 273l-136 136c-9.4 9.4-24.6 9.4-33.9 0l-22.6-22.6c-9.4-9.4-9.4-24.6 0-33.9l96.4-96.4-96.4-96.4c-9.4-9.4-9.4-24.6 0-33.9L54.3 103c9.4-9.4 24.6-9.4 33.9 0l136 136c9.5 9.4 9.5 24.6.1 34z"/></svg>
<div class="a" style="left:854px;top:1239px;width:140px;height:61px;border:2px solid #69a4f2;border-radius:31px;box-sizing:border-box;"></div>
<div class="t" style="left:854.0px;width:140px;text-align:center;top:1255.7px;font-size:28px;line-height:28px;color:#69a4f2;">GET</div>
<div class="t" style="left:1023.5px;top:1255.7px;font-size:28px;line-height:28px;color:#2b63c6;letter-spacing:0.75px;">/store/order/{orderId}</div>
<div class="t" style="left:1669.0px;top:1255.7px;font-size:28px;line-height:28px;letter-spacing:-0.4px;">Find purchase order by ID.</div>
<svg class="a" style="left:754px;top:1348.5px;overflow:visible" width="12" height="17.0" viewBox="24 96 207 320"><path fill="#151515" d="M224.3 273l-136 136c-9.4 9.4-24.6 9.4-33.9 0l-22.6-22.6c-9.4-9.4-9.4-24.6 0-33.9l96.4-96.4-96.4-96.4c-9.4-9.4-9.4-24.6 0-33.9L54.3 103c9.4-9.4 24.6-9.4 33.9 0l136 136c9.5 9.4 9.5 24.6.1 34z"/></svg>
<div class="a" style="left:790px;top:1332px;width:114px;height:55px;background:#c3d9f6;border-radius:28px;"></div>
<svg class="a" style="left:806px;top:1346px;" width="24" height="24" viewBox="0 0 512 512"><path fill="#151515" d="M0 252.118V48C0 21.49 21.49 0 48 0h204.118a48 48 0 0 1 33.941 14.059l211.882 211.882c18.745 18.745 18.745 49.137 0 67.882L293.823 497.941c-18.745 18.745-49.137 18.745-67.882 0L14.059 286.059A48 48 0 0 1 0 252.118zM112 64c-26.51 0-48 21.49-48 48s21.49 48 48 48 48-21.49 48-48-21.49-48-48-48z"/></svg>
<div class="t" style="left:837.5px;top:1346.0px;font-size:26px;line-height:26px;letter-spacing:-0.6px;">user</div>
<div class="t" style="left:935.5px;top:1346.7px;font-size:24px;line-height:24px;">Operations about user</div>
<div class="a" style="left:2521px;top:1341px;width:64px;height:36px;background:#2b63c6;border-radius:18px;"></div>
<div class="t" style="left:2521.0px;width:64px;text-align:center;top:1346.7px;font-size:24px;line-height:24px;font-weight:700;color:#ffffff;">7</div>
<svg class="a" style="left:690px;top:1431px;overflow:visible" width="12" height="17" viewBox="24 96 207 320"><path fill="#151515" d="M224.3 273l-136 136c-9.4 9.4-24.6 9.4-33.9 0l-22.6-22.6c-9.4-9.4-9.4-24.6 0-33.9l96.4-96.4-96.4-96.4c-9.4-9.4-9.4-24.6 0-33.9L54.3 103c9.4-9.4 24.6-9.4 33.9 0l136 136c9.5 9.4 9.5 24.6.1 34z"/></svg>
<div class="t" style="left:725.0px;top:1426.3px;font-size:29px;line-height:29px;font-weight:700;letter-spacing:-1.2px;">Schemas</div>
<div class="a" style="left:2521px;top:1422px;width:64px;height:36px;background:#2b63c6;border-radius:18px;"></div>
<div class="t" style="left:2521.0px;width:64px;text-align:center;top:1427.7px;font-size:24px;line-height:24px;font-weight:700;color:#ffffff;">6</div>
<div class="a" style="left:179px;top:1493px;width:3103px;height:2px;background:#d2d2d2;"></div>
<svg class="a" style="left:223px;top:1525px;" width="32" height="32" viewBox="0 0 32 32"><path d="M9 6.5 A12 12 0 1 1 4.6 20" fill="none" stroke="#151515" stroke-width="3"/><circle cx="4.3" cy="15.5" r="1.5" fill="#151515"/><circle cx="6" cy="10" r="1.5" fill="#151515"/></svg>
<div class="t" style="left:319.0px;top:1518.7px;font-size:28px;line-height:28px;">Petstore Demo</div>
<div class="t" style="left:2678.5px;top:1518.8px;font-size:28px;line-height:28px;letter-spacing:1.7px;">/api/v3</div>
<div class="t" style="left:2860.0px;top:1518.8px;font-size:28px;line-height:28px;color:#2b63c6;letter-spacing:0.4px;">hello-world</div>
<svg class="a" style="left:3184px;top:1518px;" width="27" height="27" viewBox="0 0 27 27"><g fill="none" stroke="#1f55c0" stroke-width="2.3" stroke-linejoin="round" stroke-linecap="square"><path d="M13.3 1.2 L25 13 L13.3 24.8 L1.6 13 Z"/><path d="M2.2 2.2 L9.2 9.2 M24.4 2.2 L17.4 9.2 M2.2 23.8 L9.2 16.8 M24.4 23.8 L17.4 16.8"/></g></svg>
<svg class="a" style="left:690px;top:1539px;overflow:visible" width="12" height="17" viewBox="24 96 207 320"><path fill="#151515" d="M224.3 273l-136 136c-9.4 9.4-24.6 9.4-33.9 0l-22.6-22.6c-9.4-9.4-9.4-24.6 0-33.9l96.4-96.4-96.4-96.4c-9.4-9.4-9.4-24.6 0-33.9L54.3 103c9.4-9.4 24.6-9.4 33.9 0l136 136c9.5 9.4 9.5 24.6.1 34z"/></svg>
<div class="t" style="left:725.5px;top:1533.9px;font-size:29px;line-height:29px;font-weight:700;letter-spacing:-0.8px;">Operations</div>
<div class="a" style="left:2521px;top:1530px;width:64px;height:36px;background:#2b63c6;border-radius:18px;"></div>
<div class="t" style="left:2521.0px;width:64px;text-align:center;top:1535.7px;font-size:24px;line-height:24px;font-weight:700;color:#ffffff;">19</div>
<svg class="a" style="left:687px;top:1617px;overflow:visible" width="18" height="11" viewBox="0 152 320 207"><path fill="#151515" d="M143 352.3L7 216.3c-9.4-9.4-9.4-24.6 0-33.9l22.6-22.6c9.4-9.4 24.6-9.4 33.9 0l96.4 96.4 96.4-96.4c9.4-9.4 24.6-9.4 33.9 0l22.6 22.6c9.4 9.4 9.4 24.6 0 33.9l-136 136c-9.4 9.5-24.6 9.5-34 .1z"/></svg>
<div class="t" style="left:725.0px;top:1607.5px;font-size:29px;line-height:29px;font-weight:700;letter-spacing:-1.2px;">Schemas</div>
<div class="a" style="left:2521px;top:1604px;width:64px;height:36px;background:#2b63c6;border-radius:18px;"></div>
<div class="t" style="left:2521.0px;width:64px;text-align:center;top:1609.7px;font-size:24px;line-height:24px;font-weight:700;color:#ffffff;">6</div>
<svg class="a" style="left:754px;top:1702.7px;overflow:visible" width="12" height="16.700000000000045" viewBox="24 96 207 320"><path fill="#151515" d="M224.3 273l-136 136c-9.4 9.4-24.6 9.4-33.9 0l-22.6-22.6c-9.4-9.4-9.4-24.6 0-33.9l96.4-96.4-96.4-96.4c-9.4-9.4-9.4-24.6 0-33.9L54.3 103c9.4-9.4 24.6-9.4 33.9 0l136 136c9.5 9.4 9.5 24.6.1 34z"/></svg>
<div class="t" style="left:789.5px;top:1698.5px;font-size:28px;line-height:28px;letter-spacing:-0.5px;">ApiResponse</div>
<svg class="a" style="left:754px;top:1776.3px;overflow:visible" width="12" height="16.700000000000045" viewBox="24 96 207 320"><path fill="#151515" d="M224.3 273l-136 136c-9.4 9.4-24.6 9.4-33.9 0l-22.6-22.6c-9.4-9.4-9.4-24.6 0-33.9l96.4-96.4-96.4-96.4c-9.4-9.4-9.4-24.6 0-33.9L54.3 103c9.4-9.4 24.6-9.4 33.9 0l136 136c9.5 9.4 9.5 24.6.1 34z"/></svg>
<div class="t" style="left:789.5px;top:1772.1px;font-size:28px;line-height:28px;letter-spacing:0.2px;">Category</div>
<svg class="a" style="left:754px;top:1850.5px;overflow:visible" width="12" height="16.700000000000045" viewBox="24 96 207 320"><path fill="#151515" d="M224.3 273l-136 136c-9.4 9.4-24.6 9.4-33.9 0l-22.6-22.6c-9.4-9.4-9.4-24.6 0-33.9l96.4-96.4-96.4-96.4c-9.4-9.4-9.4-24.6 0-33.9L54.3 103c9.4-9.4 24.6-9.4 33.9 0l136 136c9.5 9.4 9.5 24.6.1 34z"/></svg>
<div class="t" style="left:789.5px;top:1846.3px;font-size:28px;line-height:28px;letter-spacing:0.2px;">Order</div>
<svg class="a" style="left:754px;top:1924.3px;overflow:visible" width="12" height="16.700000000000045" viewBox="24 96 207 320"><path fill="#151515" d="M224.3 273l-136 136c-9.4 9.4-24.6 9.4-33.9 0l-22.6-22.6c-9.4-9.4-9.4-24.6 0-33.9l96.4-96.4-96.4-96.4c-9.4-9.4-9.4-24.6 0-33.9L54.3 103c9.4-9.4 24.6-9.4 33.9 0l136 136c9.5 9.4 9.5 24.6.1 34z"/></svg>
<div class="t" style="left:789.5px;top:1920.1px;font-size:28px;line-height:28px;letter-spacing:0.2px;">Pet</div>
<div class="t" style="left:1702.0px;top:1773.3px;font-size:28px;line-height:28px;letter-spacing:0.3px;">Type for Category</div>
<svg class="a" style="left:0px;top:1964px;" width="20" height="20" viewBox="0 0 20 20"><path d="M0 0 V20 H20 A20 20 0 0 1 0 0 Z" fill="#0b0660"/><path d="M0.5 0 A19.5 19.5 0 0 0 20 19.5" fill="none" stroke="#1b2433" stroke-width="1"/></svg>
<svg class="a" style="left:3288px;top:1960px;" width="24" height="24" viewBox="0 0 24 24"><path d="M24 0 V24 H0 A24 24 0 0 0 24 0 Z" fill="#6b40b5"/></svg>
<script>(function(){var w=window.innerWidth;if(w&&Math.abs(w-3312)>4){document.documentElement.style.zoom=(w/3312);}})();</script>
</body></html>
